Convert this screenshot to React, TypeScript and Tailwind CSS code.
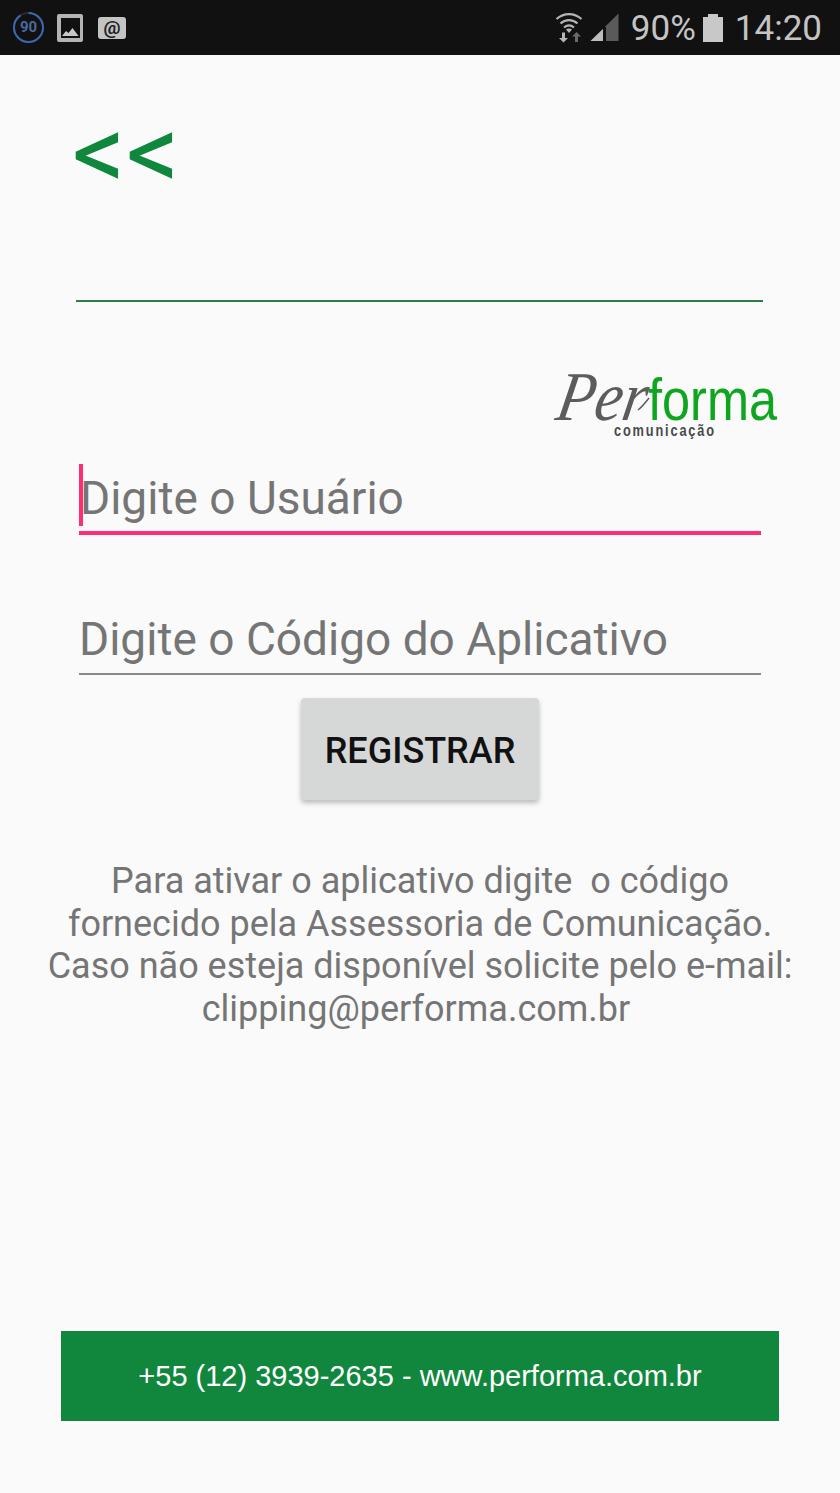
function SignalIcon() {
  return (
    <svg width="30" height="30" viewBox="0 0 30 30" className="block">
      <path d="M28.500 0.500V28H0.500Z" fill="#5a5a5a" />
      <path d="M13 16V28H0.500Z" fill="#bdbdbd" />
      <rect x="13" y="14" width="3" height="14" fill="#111111" />
    </svg>
  );
}

function WifiIcon() {
  return (
    <svg width="28" height="30" viewBox="0 0 28 30" className="block" fill="none">
      <path d="M1.500 6C9 -0.500 19 -0.500 26.500 6" stroke="#b5b5b5" strokeWidth="2.200" />
      <path d="M5.500 10.500C10.500 6 17.500 6 22.500 10.500" stroke="#b5b5b5" strokeWidth="2.200" />
      <path d="M9 14.500C12 12 16 12 19 14.500" stroke="#b5b5b5" strokeWidth="2.200" />
      <path d="M14 20L11 16.500C13 15 15 15 17 16.500Z" fill="#b5b5b5" />
      <path d="M7.500 20V25.500H4.500L9 30L13.500 25.500H10.500V20Z" fill="#b5b5b5" transform="translate(-0.500,-0.500)" />
      <path d="M20.500 29V23.500H17.500L22 19L26.500 23.500H23.500V29Z" fill="#6a6a6a" transform="translate(-0.500,0)" />
    </svg>
  );
}

function StatusBar() {
  return (
    <div className="flex h-[55px] items-center justify-between bg-[#111111] pl-[12px] pr-[18px]">
      <div className="flex items-center">
        <div className="relative flex h-[33px] w-[33px] items-center justify-center">
          <svg width="33" height="33" viewBox="0 0 33 33" className="absolute inset-0">
            <circle cx="16.500" cy="16.500" r="14.500" fill="none" stroke="#2a2a2a" strokeWidth="2" />
            <circle cx="16.500" cy="16.500" r="14.500" fill="none" stroke="#3a68b4" strokeWidth="2" strokeDasharray="82 91.100" transform="rotate(-90 16.500 16.500)" />
          </svg>
          <span className="font-['Roboto',sans-serif] text-[15px] font-bold text-[#4a6a9c]">90</span>
        </div>
        <div className="ml-[12px] flex h-[28px] w-[26px] items-center justify-center rounded-[2px] bg-[#b4b4b4]">
          <div className="flex h-[20px] w-[19px] items-end bg-[#111111]">
            <svg width="19" height="13" viewBox="0 0 19 13" className="block">
              <path d="M1 11L5 6L7.500 8L11.500 3L17.500 11Z" fill="#c8c8c8" />
            </svg>
          </div>
        </div>
        <div className="ml-[15px] flex h-[22px] w-[28px] items-center justify-center rounded-[3px] bg-[#c4c4c4]">
          <span className="font-['Roboto',sans-serif] text-[19px] font-bold leading-none text-[#222222]">@</span>
        </div>
      </div>
      <div className="flex items-center">
        <WifiIcon />
        <div className="ml-[7px]"><SignalIcon /></div>
        <span className="ml-[11px] pt-[2px] font-['Roboto',sans-serif] text-[35px] leading-none text-[#c4c4c4]">90%</span>
        <div className="ml-[7px] flex flex-col items-center">
          <div className="h-[3px] w-[10px] bg-[#c8c8c8]" />
          <div className="h-[25px] w-[20px] bg-[#c8c8c8]" />
        </div>
        <span className="ml-[12px] pt-[2px] font-['Roboto',sans-serif] text-[35px] leading-none text-[#c4c4c4]">14:20</span>
      </div>
    </div>
  );
}

function Logo() {
  return (
    <div className="ml-[530px] mt-[58px] h-[90px] w-[260px]">
      <svg width="260" height="90" viewBox="0 0 260 90" className="block">
        <text transform="translate(24 60) skewX(-10)" fontFamily="Liberation Serif" fontStyle="italic" fontSize="70" textLength="90" lengthAdjust="spacingAndGlyphs" fill="#5c5c5c">Per</text>
        <path d="M108 50C112 47 115 43 119 38" fill="none" stroke="#5c5c5c" strokeWidth="1.500" />
        <text x="118" y="60" fontFamily="Liberation Sans" fontSize="60" textLength="129" lengthAdjust="spacingAndGlyphs" fill="#0ea51f">forma</text>
        <text transform="translate(84 76) scale(0.8 1)" fontFamily="Liberation Sans" fontWeight="bold" fontSize="16" textLength="125" lengthAdjust="spacing" fill="#4a4a4a">comunicação</text>
      </svg>
    </div>
  );
}

function Field({ label, focused }: { label: string; focused?: boolean }) {
  return (
    <div className={focused ? "relative mx-[79px] flex h-[71px] items-end border-b-[4px] border-[#ff2d78]" : "mx-[79px] flex h-[71px] items-end border-b-[2px] border-[#8a8a8a]"}>
      {focused && <div className="absolute left-0 top-0 h-[62px] w-[4px] bg-[#ff2d78]" />}
      <span className={focused ? "pb-[7px] pl-[1px] font-['Roboto',sans-serif] text-[46px] leading-[52px] text-[#757575]" : "pb-[8px] font-['Roboto',sans-serif] text-[46px] leading-[52px] text-[#757575]"}>
        {label}
      </span>
    </div>
  );
}

export default function App() {
  return (
    <div className="flex min-h-[1493px] flex-col bg-[#fafafa]">
      <StatusBar />
      <div className="flex h-[247px] flex-col px-[76px]">
        <div className="mt-[48px] h-[100px] font-['Roboto',sans-serif] text-[106px] font-normal leading-[100px] text-[#0f873c]">
          <span className="ml-[-4px]">&lt;&lt;</span>
        </div>
        <div className="mt-auto h-[2px] w-[687px] bg-[#2e7d46]" />
      </div>
      <Logo />
      <div className="mt-[14px]">
        <Field label="Digite o Usuário" focused />
      </div>
      <div className="mt-[69px]">
        <Field label="Digite o Código do Aplicativo" />
      </div>
      <div className="mt-[23px] flex justify-center">
        <button className="flex h-[102px] w-[238px] items-center justify-center rounded-[4px] bg-[#d6d7d7] pt-[3px] font-['Roboto',sans-serif] text-[36px] font-medium text-[#111111] shadow-[0_3px_5px_rgba(0,0,0,0.25)]">
          REGISTRAR
        </button>
      </div>
      <div className="mt-[60px] text-center font-['Roboto',sans-serif] text-[36px] leading-[42.600px] text-[#757575]">
        <div>Para ativar o aplicativo digite&nbsp; o código</div>
        <div>fornecido pela Assessoria de Comunicação.</div>
        <div>Caso não esteja disponível solicite pelo e-mail:</div>
        <div className="pr-[8px]">clipping@performa.com.br</div>
      </div>
      <div className="mx-[61px] mt-[301px] flex h-[90px] items-center justify-center bg-[#10873d] font-['Liberation_Sans',sans-serif] text-[29px] text-white">
        +55 (12) 3939-2635 - www.performa.com.br
      </div>
    </div>
  );
}
